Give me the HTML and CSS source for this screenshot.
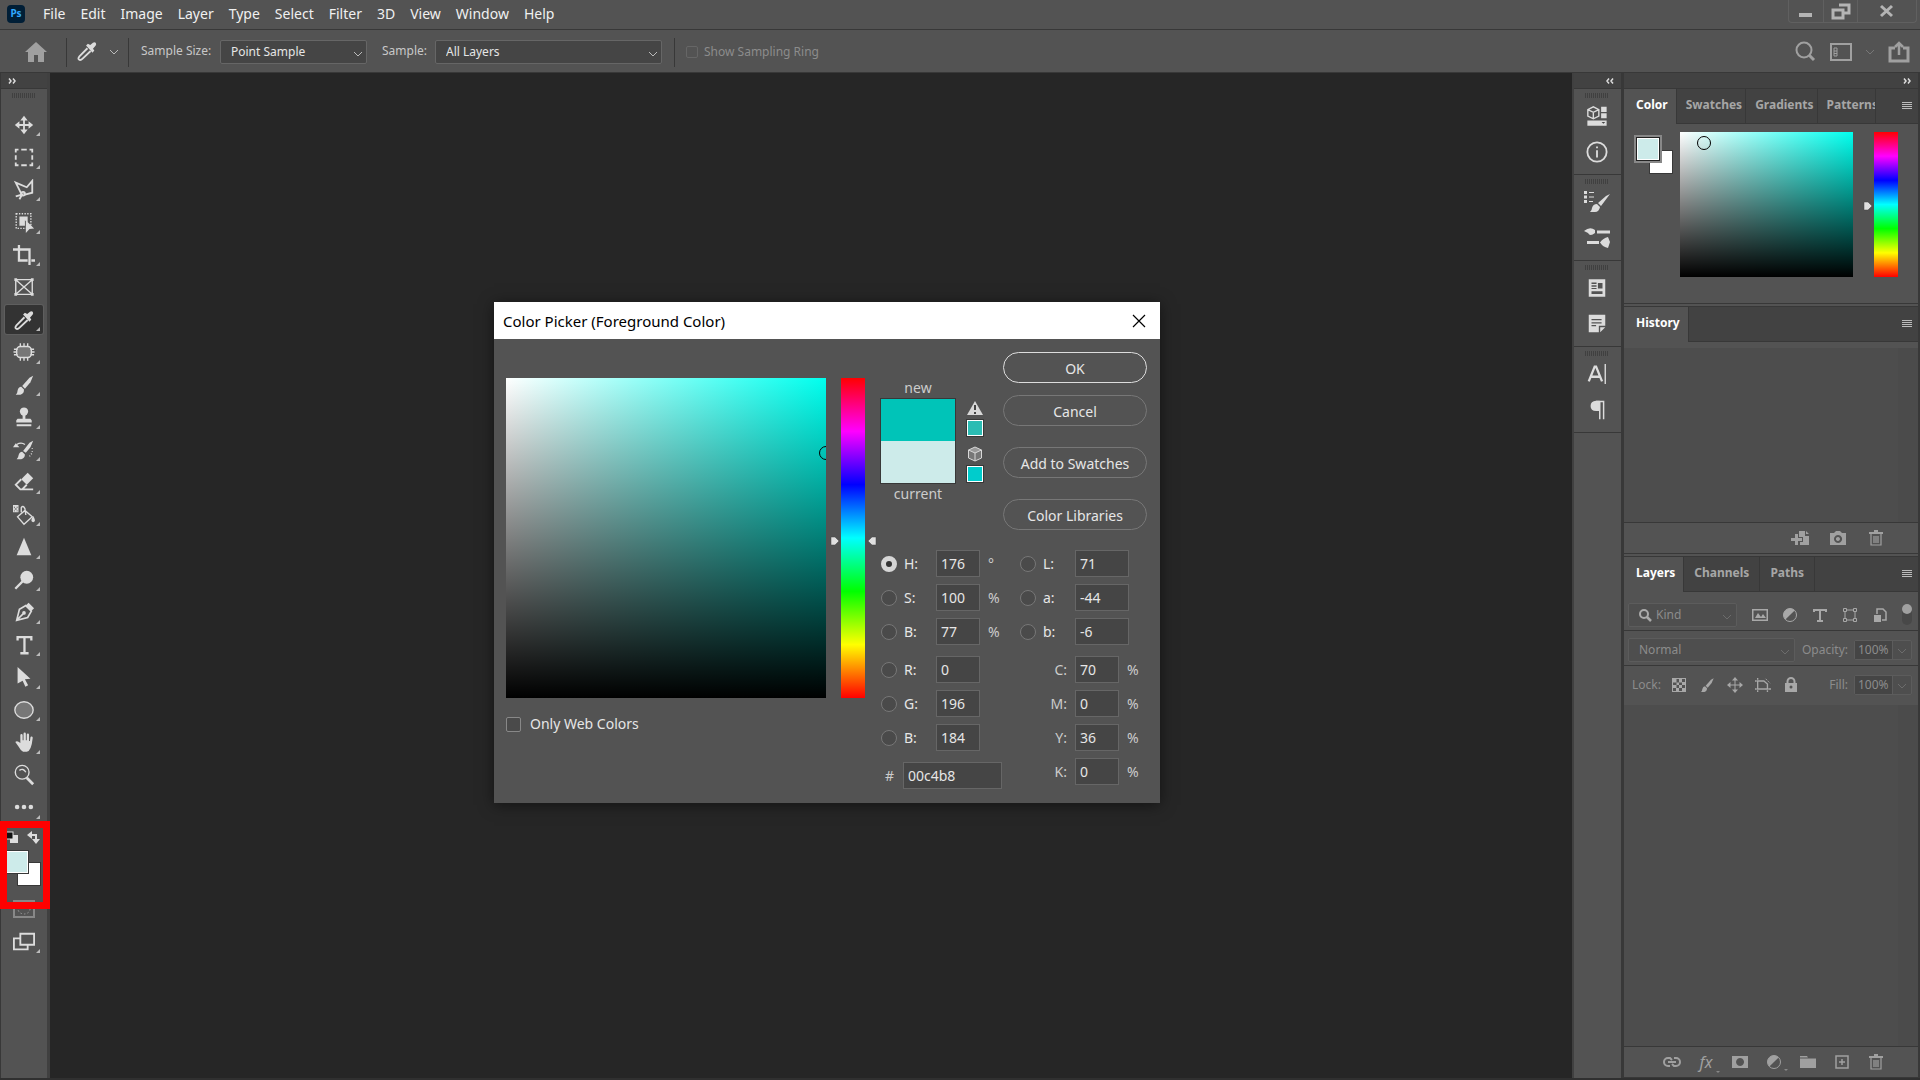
FILE: index.html
```html
<!DOCTYPE html>
<html lang="en">

<head>
    <meta charset="UTF-8">
    <meta name="viewport" content="width=device-width, initial-scale=1.0">
    <title>Photoshop</title>
    <link rel="stylesheet" href="styles.css">
</head>

<body>
    <!-- menu bar -->
    <header class="menubar">
        <span class="logo">Ps</span>
        <nav class="menu">
            <a href="#">File</a>
            <a href="#">Edit</a>
            <a href="#">Image</a>
            <a href="#">Layer</a>
            <a href="#">Type</a>
            <a href="#">Select</a>
            <a href="#">Filter</a>
            <a href="#">3D</a>
            <a href="#">View</a>
            <a href="#">Window</a>
            <a href="#">Help</a>
        </nav>
        <div class="window-buttons">
            <button aria-label="Minimize"><svg width="18" height="18"><path d="M2 11h13v4h-13z" fill="currentColor"/></svg></button>
            <button aria-label="Restore"><svg width="20" height="18"><path d="M8 3h10v8h-5M2 8h10v8h-10z" fill="none" stroke="currentColor" stroke-width="3"/></svg></button>
            <button class="wide" aria-label="Close"><svg width="16" height="16"><path d="M2 3l11 10M13 3l-11 10" stroke="currentColor" stroke-width="3"/></svg></button>
        </div>
    </header>

    <!-- options bar -->
    <div class="options">
        <button class="home" aria-label="Home"><svg width="22" height="20"><path d="M11 0L22 10H19V20H13V13H9V20H3V10H0z" fill="currentColor"/></svg></button>
        <div class="current-tool">
            <svg width="22" height="22" viewBox="0 0 24 24"><use href="#i-dropper"/></svg>
            <svg class="chev" width="10" height="6"><path d="M1 1l4 4l4-4"/></svg>
        </div>
        <label class="opt-label" for="sample-size">Sample Size:</label>
        <div class="select size">
            <select id="sample-size"><option>Point Sample</option></select>
            <svg class="chev" width="10" height="6"><path d="M1 1l4 4l4-4"/></svg>
        </div>
        <label class="opt-label second" for="sample">Sample:</label>
        <div class="select layers">
            <select id="sample"><option>All Layers</option></select>
            <svg class="chev" width="10" height="6"><path d="M1 1l4 4l4-4"/></svg>
        </div>
        <label class="ring"><input type="checkbox" disabled>Show Sampling Ring</label>
        <div class="options-right">
            <button aria-label="Search"><svg width="22" height="22"><circle cx="9" cy="9" r="7.500"/><path d="M14.500 14.500L19 19" stroke-width="3"/></svg></button>
            <button aria-label="Workspace"><svg width="22" height="18"><rect x="1" y="1" width="20" height="16"/><path d="M4 5h3v8h-3z" stroke-width="1"/><path d="M4 8h3M4 10.500h3" stroke-width="1"/></svg></button>
            <svg class="chev dim" width="10" height="6"><path d="M1 1l4 4l4-4"/></svg>
            <button aria-label="Share"><svg width="22" height="22"><path d="M7 7H2V20H20V7H15" stroke-width="3"/><path d="M11 14V3M7 6l4-4l4 4" stroke-width="2.500"/></svg></button>
        </div>
    </div>

    <div class="workspace">
        <!-- tools -->
        <aside class="toolbar">
            <div class="strip"><svg width="8" height="8"><path d="M1 1.500l2 2.500L1 6.500M5 1.500l2 2.500L5 6.500"/></svg></div>
            <div class="grip"></div>
            <div class="tools">
                <button class="tool" aria-label="Move"><svg viewBox="0 0 24 24"><path class="s" d="M12 4V20M4 12H20"/><path class="f" d="M12 2l4 5h-8zM12 22l4-5h-8zM2 12l5-4v8zM22 12l-5-4v8z"/></svg></button>
                <button class="tool" aria-label="Marquee"><svg viewBox="0 0 24 24"><path class="s" d="M3 7V4H6M9 4h6M18 4h3v3M3 10v5M21 10v5M3 18v3h3M9 21h6M18 21h3v-3"/></svg></button>
                <button class="tool" aria-label="Lasso"><svg viewBox="0 0 24 24"><path class="s" d="M9 16L3 4L15 9L21 2V15L13 17M3 19L10 17L7 22"/><circle class="s" cx="11" cy="16" r="2"/></svg></button>
                <button class="tool" aria-label="Object selection"><svg viewBox="0 0 24 24"><rect class="s" x="3.500" y="3" width="16" height="16" stroke-width="1.500" stroke-dasharray="1.500 1.500"/><path class="f" d="M7 6h9v6h-1l-2-2v6H7z"/><path class="f" d="M14 10L23 19L18 19.500L14 24z"/></svg></button>
                <button class="tool" aria-label="Crop"><svg viewBox="0 0 24 24"><path class="s" d="M0 6H18V23M6.500 1V18H16M20 18h4" stroke-width="2.500"/></svg></button>
                <button class="tool plain" aria-label="Frame"><svg viewBox="0 0 24 24"><path class="s" d="M3 4H21V20H3zL21 20M21 4L3 20" stroke-width="1.500"/><path class="f" d="M1.500 2.500h3v3h-3zM19.500 2.500h3v3h-3zM1.500 18.500h3v3h-3zM19.500 18.500h3v3h-3z"/></svg></button>
                <button class="tool active" aria-label="Eyedropper"><svg viewBox="0 0 24 24"><g id="i-dropper" stroke-width="2"><path class="s" d="M12.500 9L4 17.500Q1.500 20.500 3.500 21.500Q5 22.500 7.500 20L16 12"/><path class="f" d="M11 6l2-2l2.500 1.500L18.500 3Q20 2 21.500 3Q22.500 4.500 21.500 6L18.500 9.500L20 11.500L18 14z"/></g></svg></button>
                <button class="tool" aria-label="Patch"><svg viewBox="0 0 24 24"><rect class="s tint" x="4" y="6" width="16" height="12" rx="4" stroke-width="1.500"/><path class="s" d="M8 2.500v4M12 2.500v4M16 2.500v4M8 17.500v4M12 17.500v4M16 17.500v4M1 9h4M.500 12h4M1 15h4M19 9h4M19.500 12h4M19 15h4" stroke-width="1.500"/></svg></button>
                <button class="tool" aria-label="Brush"><svg viewBox="0 0 24 24"><g id="i-brush"><path class="f" d="M22 2L18 4L10 13L13 16L19 9z"/><path class="f" d="M9 14L12 17Q12 22 8 22.500H3Q5 21 5 18Q6 14 9 14z"/></g></svg></button>
                <button class="tool" aria-label="Stamp"><svg viewBox="0 0 24 24"><circle class="f" cx="12" cy="6" r="4.500"/><path class="f" d="M10.500 9h3v5H19Q21 15 20.500 18h-17Q3 15 5 14h5.500zM4 20h16v2H4z"/></svg></button>
                <button class="tool" aria-label="History brush"><svg viewBox="0 0 24 24"><path class="f" d="M22 2L18 4L11 13L14 15L19 9zM10 14L13 17Q13 21 9 22H4Q6 20 6 18Q7 14 10 14zM0 9L3 4.500L7 9z"/><path class="s" d="M4 6Q9 3 13 6" stroke-width="1.500"/><path class="s" d="M21 10v5l-3 4" stroke-width="1.500" stroke-dasharray="1 2"/></svg></button>
                <button class="tool" aria-label="Eraser"><svg viewBox="0 0 24 24"><path class="f" d="M9 9L16 2L22 8L15 15z"/><path class="s" d="M9 9L3 15L8 20H22M15 15L10 20"/></svg></button>
                <button class="tool" aria-label="Bucket"><svg viewBox="0 0 24 24"><path class="s" d="M5 14L13 7L21 14L12 22zM9 9V4Q11 1 13 5L14 12" stroke-width="1.500"/><path class="f" d="M22 13q4 6 0 7q-4-1 0-7zM0 1h6v8h-6z"/><path d="M1 3h1v1H1zM4 3h1v1H4zM2 5h2v1H2zM1 7h1v1H1zM4 7h1v1H4z" fill="#444"/></svg></button>
                <button class="tool" aria-label="Sharpen"><svg viewBox="0 0 24 24"><path class="f" d="M12 2L20 21H4z"/></svg></button>
                <button class="tool" aria-label="Dodge"><svg viewBox="0 0 24 24"><circle class="f" cx="15" cy="9" r="7"/><path class="s" d="M11 13L2.500 21.500" stroke-width="2.500"/></svg></button>
                <button class="tool" aria-label="Pen"><svg viewBox="0 0 24 24"><path class="s" d="M14 5L7 9L4 21L16 18L20 11zM4 21L11 14" stroke-width="1.800"/><path class="f" d="M14 5l3-3l6 6l-3 3z"/><circle class="f" cx="12" cy="13" r="2"/></svg></button>
                <button class="tool" aria-label="Type"><svg viewBox="0 0 24 24"><path class="s" d="M5 7V3.500H20V7M12.500 3.500V21M8 21h9" stroke-width="2.500"/></svg></button>
                <button class="tool" aria-label="Path selection"><svg viewBox="0 0 24 24"><path class="f" d="M5 1L19 14L13 14.500L16.500 21L13.500 22.500L10.500 16L5 19z"/></svg></button>
                <button class="tool" aria-label="Ellipse"><svg viewBox="0 0 24 24"><ellipse class="s tint" cx="12" cy="12" rx="10" ry="9" stroke-width="1.500"/></svg></button>
                <button class="tool" aria-label="Hand"><svg viewBox="0 0 24 24"><path class="f" d="M8 13V4.500a1.200 1.200 0 0 1 2.500 0V10h1V3a1.200 1.200 0 0 1 2.500 0V10h1V4a1.200 1.200 0 0 1 2.500 0V11h1L19 7a1.200 1.200 0 0 1 2.500 .5Q20 22 15 22.500H11Q8 21 6 17L2.500 12q2-2 5.500 1z"/></svg></button>
                <button class="tool plain" aria-label="Zoom"><svg viewBox="0 0 24 24"><circle class="s" cx="10" cy="9" r="7.500" stroke-width="1.500"/><path class="s" d="M7 7q4-3 7 2" stroke-width="1.500"/><path class="s" d="M15 15L22 22" stroke-width="3"/></svg></button>
                <button class="tool" aria-label="More"><svg viewBox="0 0 24 24"><circle class="f" cx="4.500" cy="12" r="2.500"/><circle class="f" cx="12" cy="12" r="2.500"/><circle class="f" cx="19.500" cy="12" r="2.500"/></svg></button>
            </div>
            <div class="tool-colors">
                <svg width="46" height="80" viewBox="1 824 46 80">
                    <rect x="10" y="835" width="8" height="8" fill="#ddd"/>
                    <rect x="5" y="832" width="8" height="7" fill="#111" stroke="#ddd"/>
                    <path d="M30 835h6v6" fill="none" stroke="#ddd" stroke-width="2"/>
                    <path d="M27 835l5-4v8zM36 844l-4-5h8z" fill="#ddd"/>
                    <rect x="17" y="862" width="24" height="24" fill="#383838"/>
                    <rect x="18" y="863" width="22" height="22" fill="#fff"/>
                    <rect x="4" y="850" width="25" height="24" fill="#383838"/>
                    <rect x="5" y="851" width="23" height="22" fill="#fff"/>
                    <rect x="6" y="852" width="21" height="20" fill="#cdebea"/>
                </svg>
            </div>
            <div class="view-modes">
                <svg width="24" height="20"><rect x="2" y="1" width="20" height="16" fill="none" stroke="#888" stroke-width="2"/><ellipse cx="12" cy="9" rx="6" ry="5" fill="none" stroke="#999" stroke-dasharray="1.500 2"/></svg>
                <button class="tool" aria-label="Screen mode"><svg viewBox="0 0 24 24"><path class="s" d="M8 8H1V20H16V16M8 3H23V15H8z"/></svg></button>
            </div>
        </aside>

        <main class="canvas"></main>

        <!-- collapsed panels -->
        <aside class="dock">
            <div class="strip end"><svg width="8" height="8"><path d="M3 1.500L1 4l2 2.500M7 1.500L5 4l2 2.500"/></svg></div>
            <div class="dock-group">
                <div class="grip"></div>
                <button aria-label="Properties"><svg viewBox="0 0 24 24"><path class="s" d="M2 5l6-3l6 3v7l-6 3l-6-3zl6 3l6-3M8 8v7" stroke-width="1.500"/><path class="f" d="M16.500 2h6v5.500h-6zM16.500 9h6v5.500h-6zM1.500 17h21v5.500h-21z"/><path d="M17 18.500h4l-2 2z" fill="#444"/></svg></button>
                <button aria-label="Info"><svg viewBox="0 0 24 24"><circle class="s" cx="12" cy="12" r="10.500"/><path class="s" d="M12 10v8M12 6v2"/></svg></button>
            </div>
            <div class="dock-group">
                <div class="grip"></div>
                <button aria-label="Brush settings"><svg class="big" viewBox="0 0 26 24"><path class="f" d="M0 1h3v3h-3zM0 5.500h3v3h-3zM0 10h3v3h-3zM5 2h5v1h-5zM5 6.500h5v1h-5zM5 11h4v1h-4zM26 4L22 6L14 13L17 16zM13 14L16 17Q15 22 11 22H6Q8 20 8 18Q9 14 13 14z"/></svg></button>
                <button aria-label="Brushes"><svg class="big" viewBox="0 0 26 24"><path class="f" d="M0 5Q6 0 11 4V7Q6 11 4 7zM13 4.500h13v3h-13zM3 15h12v3h-12zM16 16.500Q19 12 24 11L26 16L24 22Q19 21 16 16.500z"/></svg></button>
            </div>
            <div class="dock-group">
                <div class="grip"></div>
                <button aria-label="Libraries"><svg viewBox="0 0 24 24"><path class="f" fill-rule="evenodd" d="M3 2.500h18v19H3zM6 6v1.500h5.500V6zM6 9v1.500h5.500V9zM6 12v1h5.500v-1zM13 6.500v6h5v-6zM6 15.500v3h12v-3z"/></svg></button>
                <button aria-label="Notes"><svg viewBox="0 0 24 24"><path class="f" fill-rule="evenodd" d="M3 2h18v12h-7v7H3zM6 6.500v1.500h11v-1.500zM6 10v1.500h11v-1.500zM6 13v1.500h5v-1.500zM15.500 15.500h5.500l-5.500 5.500z"/></svg></button>
            </div>
            <div class="dock-group">
                <div class="grip"></div>
                <button aria-label="Character"><svg viewBox="0 0 24 24"><path class="s" d="M3 20L9.500 4H11L17.500 20M6 15h9" stroke-width="2.500"/><path class="s" d="M21 1v22" stroke-width="1.500"/></svg></button>
                <button aria-label="Paragraph"><svg viewBox="0 0 24 24"><path class="f" d="M15 2H11Q5 2.500 5 7.500Q5 13 11 13H15z"/><path class="s" d="M11 2.800H20M15 3v19M19.200 3v19" stroke-width="1.600"/></svg></button>
            </div>
        </aside>

        <!-- panels -->
        <aside class="panels">
            <div class="strip end"><svg width="8" height="8"><path d="M1 1.500l2 2.500L1 6.500M5 1.500l2 2.500L5 6.500"/></svg></div>

            <section class="panel color-panel">
                <div class="tabs">
                    <button class="tab on">Color</button>
                    <button class="tab">Swatches</button>
                    <button class="tab">Gradients</button>
                    <button class="tab clip">Patterns</button>
                    <button class="panel-menu" aria-label="Color panel menu"></button>
                </div>
                <div class="color-body">
                    <div class="pair"><span class="bg"></span><span class="fg"></span></div>
                    <div class="field small"><span class="ring-mark"></span></div>
                    <div class="hue small">
                        <svg class="mark left" width="9" height="10"><path d="M1 1h4l4 4l-4 4h-4z"/></svg>
                        <input type="range" min="0" max="360" value="176" aria-label="Hue">
                    </div>
                </div>
            </section>

            <section class="panel history">
                <div class="tabs">
                    <button class="tab on">History</button>
                    <button class="panel-menu" aria-label="History panel menu"></button>
                </div>
                <div class="list"></div>
                <div class="panel-foot">
                    <button aria-label="New document from state"><svg viewBox="0 0 20 16"><path d="M9 1h6v5h4v9h-9v-3h3V7H9zM16 1l3 3h-3zM1 8h4V4h3v4h4v3h-4v4h-3v-4H1z"/></svg></button>
                    <button aria-label="New snapshot"><svg viewBox="0 0 20 16"><path fill-rule="evenodd" d="M2 3h4l2-2h4l2 2h4v12H2zM10 5a4 4 0 1 0 .1 0zM10 7a2 2 0 1 1-.1 0z"/></svg></button>
                    <button aria-label="Delete state"><svg viewBox="0 0 20 16"><g id="i-trash"><path d="M3 2h14v2h-14zM8 0h4v2h-4z"/><path d="M5 4V15H15V4M8 6v7M10 6v7M12 6v7" fill="none" stroke="currentColor" stroke-width="1.200"/></g></svg></button>
                </div>
            </section>

            <section class="panel layers-panel">
                <div class="tabs">
                    <button class="tab on">Layers</button>
                    <button class="tab">Channels</button>
                    <button class="tab">Paths</button>
                    <button class="panel-menu" aria-label="Layers panel menu"></button>
                </div>
                <div class="layer-row filter">
                    <div class="select off kind">
                        <svg class="glass" width="13" height="13"><circle cx="5" cy="5" r="4"/><path d="M8 8l4 4" stroke-width="2.500"/></svg>
                        <select disabled aria-label="Filter type"><option>Kind</option></select>
                        <svg class="chev" width="10" height="6"><path d="M1 1l4 4l4-4"/></svg>
                    </div>
                    <div class="filters">
                        <button aria-label="Pixel layers"><svg viewBox="0 0 16 16"><path fill-rule="evenodd" d="M0 2h16v12H0zM1.500 3.500v9h13v-9zM3 11l3-5l3 4l2-3l3 4z"/></svg></button>
                        <button aria-label="Adjustment layers"><svg viewBox="0 0 16 16"><g id="i-adjust"><circle cx="8" cy="8" r="6.500" fill="none" stroke="currentColor"/><path d="M12.600 3.400A6.500 6.500 0 0 0 3.400 12.600z"/></g></svg></button>
                        <button aria-label="Type layers"><svg viewBox="0 0 16 16"><path d="M2 5V3H14V5M8 3v11M5 14h6" fill="none" stroke="currentColor" stroke-width="2"/></svg></button>
                        <button aria-label="Shape layers"><svg viewBox="0 0 16 16"><path d="M5 3h6M5 13h6M3 5v6M13 5v6M1.500 1.500h3v3h-3zM11.500 1.500h3v3h-3zM1.500 11.500h3v3h-3zM11.500 11.500h3v3h-3z" fill="none" stroke="currentColor"/></svg></button>
                        <button aria-label="Smart objects"><svg viewBox="0 0 16 16"><path d="M5 7V2H11L14 5V13H10" fill="none" stroke="currentColor" stroke-width="1.500"/><path d="M2 8h7v7H2z"/></svg></button>
                        <button class="switch" aria-label="Filtering on/off"></button>
                    </div>
                </div>
                <div class="layer-row mode">
                    <div class="select off blend">
                        <select disabled aria-label="Blend mode"><option>Normal</option></select>
                        <svg class="chev" width="10" height="6"><path d="M1 1l4 4l4-4"/></svg>
                    </div>
                    <label class="amount">Opacity: <span class="combo"><input value="100%" disabled><svg class="chev" width="10" height="6"><path d="M1 1l4 4l4-4"/></svg></span></label>
                </div>
                <div class="layer-row last">
                    <span class="lock">Lock:</span>
                    <div class="locks">
                        <button aria-label="Lock transparency"><svg viewBox="0 0 16 16"><path fill-rule="evenodd" d="M1 1h14v14H1zM5.500 2v3.500H2V8h3.500V5.500H8V2zM8 5.500V8h3V5.500zM11 2v3h3V2zM11 8v3h3V8zM5.500 8v3H8V8zM2 11v3h3v-3zM8 11v3h3v-3z"/></svg></button>
                        <button aria-label="Lock pixels"><svg viewBox="0 0 24 24"><use href="#i-brush"/></svg></button>
                        <button aria-label="Lock position"><svg viewBox="0 0 16 16"><path d="M8 2v12M2 8h12" stroke="currentColor"/><path d="M8 0l3 3.500H5zM8 16l3-3.500H5zM0 8l3.500-3v6zM16 8l-3.500-3v6z"/></svg></button>
                        <button aria-label="Lock artboard"><svg viewBox="0 0 18 16"><path d="M3 0v2M0 3.500h2M3 3.500H10L14 7V12.500H3zM3 14v2M0 12.500h2M14 14v2M15 12.500h3" fill="none" stroke="currentColor" stroke-width="1.500"/><path d="M12 1l5 5" stroke="currentColor" stroke-dasharray="2 1"/></svg></button>
                        <button aria-label="Lock all"><svg viewBox="0 0 16 16"><path d="M2 6h12v9H2z"/><path d="M4.500 7V4.500a3.500 3.500 0 0 1 7 0V7" fill="none" stroke="currentColor" stroke-width="2"/><circle cx="8" cy="10" r="1.500" fill="#535353"/></svg></button>
                    </div>
                    <label class="amount">Fill: <span class="combo"><input value="100%" disabled><svg class="chev" width="10" height="6"><path d="M1 1l4 4l4-4"/></svg></span></label>
                </div>
                <div class="list"></div>
                <div class="panel-foot">
                    <button aria-label="Link layers"><svg viewBox="0 0 20 16"><path d="M8 12H6a4 4 0 0 1 0-8h2l2 2M12 4h2a4 4 0 0 1 0 8h-2l-2-2M6 8h8" fill="none" stroke="currentColor" stroke-width="2"/></svg></button>
                    <button class="fx more">fx</button>
                    <button aria-label="Add mask"><svg viewBox="0 0 20 16"><path fill-rule="evenodd" d="M2 2h16v12H2zM10 4a4 4 0 1 0 .1 0z"/></svg></button>
                    <button class="more" aria-label="New adjustment layer"><svg viewBox="-2 0 20 16"><use href="#i-adjust"/></svg></button>
                    <button aria-label="New group"><svg viewBox="0 0 20 16"><path d="M2 2h7l1 1.500H2zM2 4.500h16V14H2z"/></svg></button>
                    <button aria-label="New layer"><svg viewBox="0 0 20 16"><path d="M4 2h12v12H4zM10 5v6M7 8h6" fill="none" stroke="currentColor" stroke-width="1.500"/></svg></button>
                    <button aria-label="Delete layer"><svg viewBox="0 0 20 16"><use href="#i-trash"/></svg></button>
                </div>
            </section>
        </aside>
    </div>

    <!-- color picker window -->
    <form class="dialog">
        <div class="title">
            <span>Color Picker (Foreground Color)</span>
            <button type="button" aria-label="Close dialog"><svg width="14" height="14"><path d="M1 1l12 12M13 1l-12 12" stroke="#000" stroke-width="1.200"/></svg></button>
        </div>
        <div class="dialog-body">
            <div class="picker">
                <div class="picker-top">
                    <div class="field"><span class="ring-mark"></span></div>
                    <div class="hue">
                        <svg class="mark left" width="9" height="10"><path d="M1 1h4l4 4l-4 4h-4z"/></svg>
                        <input type="range" min="0" max="360" value="176" aria-label="Hue">
                        <svg class="mark right" width="9" height="10"><path d="M8 1h-4l-4 4l4 4h4z"/></svg>
                    </div>
                </div>
                <label class="web"><input type="checkbox">Only Web Colors</label>
            </div>
            <div class="side">
                <div class="side-top">
                    <div class="preview">
                        <span>new</span>
                        <div class="compare"><i class="new"></i><i class="cur"></i></div>
                        <span>current</span>
                    </div>
                    <div class="warnings">
                        <svg width="16" height="16"><path d="M8 1L16 15H0z" fill="#d8d8d8"/><path d="M8 5v5M8 12v2" stroke="#444" stroke-width="2"/></svg>
                        <i class="gamut"></i>
                        <svg width="16" height="16"><path d="M1.500 4L8 1L14.500 4V12L8 15L1.500 12z" fill="#777"/><path d="M8 7L14.500 4L8 1L1.500 4z" fill="#999"/><path d="M1.500 4L8 1L14.500 4V12L8 15L1.500 12V4L8 7L14.500 4M8 7V15" fill="none" stroke="#d8d8d8"/></svg>
                        <i class="websafe"></i>
                    </div>
                    <div class="actions">
                        <button type="button" class="ok">OK</button>
                        <button type="button" class="cancel">Cancel</button>
                        <button type="button">Add to Swatches</button>
                        <button type="button">Color Libraries</button>
                    </div>
                </div>
                <div class="values">
                    <div class="col">
                        <div class="row"><label><input type="radio" name="c" checked>H:</label><input type="text" value="176" aria-label="H"><span>°</span></div>
                        <div class="row"><label><input type="radio" name="c">S:</label><input type="text" value="100" aria-label="S"><span>%</span></div>
                        <div class="row end"><label><input type="radio" name="c">B:</label><input type="text" value="77" aria-label="B"><span>%</span></div>
                        <div class="row"><label><input type="radio" name="c">R:</label><input type="text" value="0" aria-label="R"></div>
                        <div class="row"><label><input type="radio" name="c">G:</label><input type="text" value="196" aria-label="G"></div>
                        <div class="row end"><label><input type="radio" name="c">B:</label><input type="text" value="184" aria-label="Blue"></div>
                        <div class="row hex"><label for="hex">#</label><input type="text" id="hex" value="00c4b8"></div>
                    </div>
                    <div class="col lab">
                        <div class="row"><label><input type="radio" name="c">L:</label><input type="text" value="71" aria-label="L"></div>
                        <div class="row"><label><input type="radio" name="c">a:</label><input type="text" value="-44" aria-label="a"></div>
                        <div class="row end"><label><input type="radio" name="c">b:</label><input type="text" value="-6" aria-label="b"></div>
                        <div class="row cmyk"><label for="cy">C:</label><input type="text" id="cy" value="70"><span>%</span></div>
                        <div class="row cmyk"><label for="ma">M:</label><input type="text" id="ma" value="0"><span>%</span></div>
                        <div class="row cmyk"><label for="ye">Y:</label><input type="text" id="ye" value="36"><span>%</span></div>
                        <div class="row cmyk"><label for="bk">K:</label><input type="text" id="bk" value="0"><span>%</span></div>
                    </div>
                </div>
            </div>
        </div>
    </form>
</body>

</html>
```
FILE: styles.css
```css
:root {
    --bg: #535353;
    --dark: #424242;
    --line: #383838;
    --input: #454545;
    --edge: #666;
    --text: #e6e6e6;
    --icon: #dcdcdc;
    --dim: #8c8c8c;
    --hues: linear-gradient(#f00, #f0f, #00f, #0ff, #0f0, #ff0, #f00);
}

*,
*::before,
*::after {
    box-sizing: border-box;
    margin: 0;
    padding: 0;
}

body {
    display: flex;
    flex-direction: column;
    height: 100vh;
    overflow: hidden;
    background: #262626;
    color: var(--text);
    font: 12px/20px "Noto Sans", sans-serif;
}

button,
input,
select {
    font: inherit;
    color: inherit;
}

button {
    background: none;
    border: 0;
}

svg {
    display: block;
}

.s {
    fill: none;
    stroke: var(--icon);
}

.s.tint {
    fill: #777;
}

.f {
    fill: var(--icon);
}

.chev {
    fill: none;
    stroke: #bbb;
    stroke-width: 1;
}

.chev.dim {
    stroke: #777;
}

/* menu bar */
.menubar {
    display: flex;
    align-items: center;
    flex: none;
    height: 30px;
    padding: 0 3px 2px 7px;
    background: var(--bg);
    border-bottom: 1px solid var(--line);
}

.logo {
    width: 18px;
    height: 18px;
    border-radius: 4px;
    background: #001e36;
    color: #31a8ff;
    font-size: 10px;
    font-weight: 700;
    line-height: 17px;
    text-align: center;
}

.menu {
    display: flex;
    gap: 15px;
    padding-left: 18px;
    font-size: 14px;
}

.menu a {
    color: #f0f0f0;
    text-decoration: none;
}

.window-buttons {
    display: flex;
    align-self: flex-start;
    height: 23px;
    margin-left: auto;
    border: 1px solid #606060;
    border-top: 0;
    border-radius: 0 0 4px 4px;
    color: #b4b4b4;
}

.window-buttons button {
    display: flex;
    align-items: center;
    justify-content: center;
    width: 34px;
}

.window-buttons button + button {
    border-left: 1px solid #606060;
}

.window-buttons .wide {
    width: 59px;
}

/* options bar */
.options {
    display: flex;
    align-items: center;
    flex: none;
    height: 43px;
    padding: 2px 10px 0 25px;
    background: var(--bg);
    border-bottom: 1px solid var(--line);
}

.home {
    color: #a0a0a0;
    margin-right: 19px;
}

.current-tool {
    display: flex;
    align-items: center;
    gap: 11px;
    height: 29px;
    width: 63px;
    padding-left: 9px;
    border: solid var(--line);
    border-width: 0 1px;
}

.current-tool svg:first-child {
    margin-bottom: 3px;
}

.opt-label {
    width: 79px;
    margin-left: 12px;
    padding-bottom: 3px;
    color: #c8c8c8;
}

.opt-label.second {
    width: 53px;
    margin-left: 15px;
}

.select {
    position: relative;
    height: 24px;
    border: 1px solid var(--edge);
    border-radius: 2px;
    background: var(--input);
}

.select select {
    width: 100%;
    height: 100%;
    padding: 0 20px 0 10px;
    appearance: none;
    background: none;
    border: 0;
    opacity: 1;
}

.select .chev {
    position: absolute;
    right: 3px;
    top: 10px;
    pointer-events: none;
}

.select.size {
    width: 147px;
}

.select.layers {
    width: 227px;
}

.ring {
    display: flex;
    align-items: center;
    gap: 6px;
    height: 29px;
    margin-left: 12px;
    padding-left: 11px;
    border-left: 1px solid var(--line);
    color: var(--dim);
}

input[type="checkbox"] {
    width: 12px;
    height: 12px;
    appearance: none;
    border: 1px solid var(--edge);
    border-radius: 2px;
}

.options-right {
    display: flex;
    align-items: center;
    gap: 13px;
    margin-left: auto;
    color: #a0a0a0;
}

.options-right button svg {
    fill: none;
    stroke: currentColor;
    stroke-width: 2;
}

/* workspace */
.workspace {
    display: flex;
    flex: 1;
    min-height: 0;
    border-bottom: 2px solid #303030;
}

.canvas {
    flex: 1;
    background: #262626;
}

.strip {
    display: flex;
    align-items: center;
    flex: none;
    height: 16px;
    padding: 0 7px;
    background: var(--dark);
    border-bottom: 1px solid var(--line);
}

.strip.end {
    justify-content: flex-end;
}

.strip svg {
    fill: none;
    stroke: #ddd;
    stroke-width: 1.500;
}

.grip {
    width: 24px;
    height: 5px;
    margin: 4px auto 0;
    background: repeating-linear-gradient(90deg, #404040 0 1px, var(--bg) 1px 2px);
}

.toolbar {
    position: relative;
    z-index: 1;
    display: flex;
    flex-direction: column;
    width: 50px;
    background: var(--bg);
    border-left: 1px solid var(--line);
    border-right: 3px solid #404040;
}

.tools {
    display: grid;
    grid-auto-rows: 1fr;
    height: 715px;
    margin-top: 10px;
}

.tool {
    position: relative;
    display: flex;
    align-items: center;
    justify-content: center;
    width: 38px;
    height: 29px;
    margin: 2px 0 0 4px;
}

.tool svg,
.dock-group svg {
    width: 22px;
    height: 22px;
    stroke-width: 2;
}

.tool::after {
    content: "";
    position: absolute;
    right: 3px;
    bottom: 3px;
    border-left: 4px solid transparent;
    border-bottom: 4px solid #bbb;
}

.tool.plain::after {
    display: none;
}

.tool.active {
    background: #333;
    border-radius: 2px;
    box-shadow: 0 0 0 1px #5e5e5e;
}

.tool-colors {
    position: relative;
    height: 76px;
    margin-top: 1px;
}

/* highlight frame around the color swatches */
.tool-colors::after {
    content: "";
    position: absolute;
    left: -1px;
    top: -3px;
    width: 50px;
    height: 88px;
    border: 7px solid #f00;
}

.view-modes {
    display: flex;
    flex-direction: column;
    gap: 5px;
}

.view-modes > svg {
    margin-left: 11px;
}

/* collapsed dock */
.dock {
    width: 52px;
    background: var(--bg);
    border-left: 2px solid #404040;
    border-right: 3px solid var(--line);
}

.dock-group {
    display: flex;
    flex-direction: column;
    align-items: center;
    height: 86px;
    padding-right: 1px;
    border-bottom: 1px solid var(--line);
}

.dock-group button {
    display: flex;
    align-items: center;
    height: 36px;
}

.dock-group svg.big {
    width: 26px;
    height: 24px;
}

/* panels */
.panels {
    display: flex;
    flex-direction: column;
    width: 296px;
    background: var(--bg);
    border-right: 2px solid var(--line);
}

.panel + .panel {
    border-top: 1px solid var(--line);
}

.panel {
    margin-bottom: 2px;
    border-bottom: 1px solid var(--line);
}

.tabs {
    display: flex;
    height: 35px;
    background: var(--dark);
    color: #a6a6a6;
    font-weight: 700;
}

.tab {
    flex: none;
    padding: 0 10px 3px;
    border: solid var(--line);
    border-width: 0 1px 1px 0;
}

.color-panel .tab {
    padding: 0 3px 3px 9px;
}

.panel .tab.on {
    padding: 0 8px 3px 12px;
    border-bottom: 0;
    background: var(--bg);
    color: #fff;
}

.tab.clip {
    width: 58px;
    overflow: hidden;
    text-align: left;
}

.panel-menu {
    flex: 1;
    border-bottom: 1px solid var(--line);
}

.panel-menu::after {
    content: "";
    display: block;
    width: 10px;
    height: 7px;
    margin: 0 6px 2px auto;
    background: repeating-linear-gradient(#bbb 0 1px, transparent 1px 2px);
}

.color-body {
    display: flex;
    height: 179px;
    padding: 8px 20px 0 10px;
}

.pair {
    position: relative;
    width: 39px;
    height: 39px;
    margin: 3px 7px 0 0;
}

.pair span {
    position: absolute;
}

.pair .bg {
    right: 0;
    bottom: 0;
    width: 24px;
    height: 24px;
    border: 1px solid var(--line);
    background: #fff;
}

.pair .fg {
    left: 0;
    top: 0;
    width: 28px;
    height: 28px;
    border: 2px solid #888;
    outline: 1px solid #222;
    outline-offset: -3px;
    background: #cdebea;
    box-shadow: inset 0 0 0 2px #fff;
}

.field {
    position: relative;
    width: 320px;
    height: 320px;
    overflow: hidden;
    background: linear-gradient(to top, #000, transparent), linear-gradient(to right, #fff, #00ffee);
}

.field.small {
    flex: 1;
    width: auto;
    height: 145px;
}

.ring-mark {
    position: absolute;
    left: 313px;
    top: 68px;
    width: 14px;
    height: 14px;
    border: 1px solid #000;
    border-radius: 50%;
}

.small .ring-mark {
    left: 17px;
    top: 4px;
}

.hue {
    position: relative;
    width: 24px;
    height: 320px;
    margin-left: 15px;
}

.hue.small {
    height: 145px;
    margin-left: 21px;
}

.hue input {
    display: block;
    width: 100%;
    height: 100%;
    appearance: none;
    writing-mode: vertical-lr;
    background: var(--hues);
}

.hue input::-webkit-slider-thumb {
    appearance: none;
    width: 24px;
    height: 1px;
}

.mark {
    position: absolute;
    top: calc(51% - 5px);
    stroke: #444;
    stroke-width: .5;
}

.hue .mark {
    fill: #e0e0e0;
}

.mark.left {
    left: -11px;
}

.mark.right {
    right: -12px;
}

.list {
    background: #4d4d4d;
    border-right: 20px solid #4b4b4b;
}

.history .list {
    height: 174px;
    margin-top: 6px;
}

.layers-panel {
    --icon: #a8a8a8;
    display: flex;
    flex: 1;
    flex-direction: column;
    margin: 0;
}

.layers-panel .list {
    flex: 1;
}

.panel-foot {
    display: flex;
    align-items: center;
    justify-content: flex-end;
    gap: 14px;
    height: 31px;
    padding-right: 32px;
    border-top: 1px solid var(--line);
    color: #a0a0a0;
}

.panel-foot button {
    width: 20px;
}

.history .panel-foot {
    gap: 18px;
}

.panel svg {
    fill: currentColor;
}

.panel .chev,
.panel .glass {
    fill: none;
}

.fx {
    font: italic 16px/20px "Noto Sans", sans-serif;
}

.more {
    position: relative;
}

.more::after {
    content: "";
    position: absolute;
    right: -4px;
    bottom: -3px;
    border: 2px solid transparent;
    border-top-color: #888;
}

.layer-row {
    display: flex;
    align-items: center;
    justify-content: space-between;
    height: 35px;
    padding: 0 6px 0 4px;
    border-bottom: 1px solid var(--line);
    color: var(--dim);
}

.layer-row.filter {
    height: 39px;
    padding-top: 7px;
}

.layer-row.mode {
    padding-top: 3px;
}

.layer-row.last {
    height: 39px;
    padding-bottom: 2px;
    border-bottom: 0;
}

.select.off,
.combo {
    background: #4e4e4e;
    border-color: #5c5c5c;
}

.select.off .chev {
    right: 4px;
    stroke: #6c6c6c;
}

.kind {
    width: 109px;
}

.kind select {
    padding-left: 27px;
}

.glass {
    position: absolute;
    left: 10px;
    top: 5px;
    stroke: #aaa;
    stroke-width: 2;
}

.blend {
    width: 167px;
}

.filters {
    display: flex;
    align-items: center;
    gap: 14px;
    color: #a8a8a8;
}

.filters button {
    width: 16px;
}

.filters .switch {
    width: 10px;
    height: 21px;
    border-radius: 5px;
    background: #484848;
}

.switch::before {
    content: "";
    display: block;
    width: 10px;
    height: 10px;
    margin-bottom: 11px;
    border-radius: 50%;
    background: #a0a0a0;
}

.amount {
    display: flex;
    align-items: center;
    gap: 6px;
}

.combo {
    display: flex;
    align-items: center;
    width: 58px;
    height: 20px;
    border: 1px solid #5c5c5c;
    border-radius: 2px;
}

.combo input {
    width: 38px;
    height: 18px;
    padding-left: 3px;
    border: 0;
    border-right: 1px solid #5c5c5c;
    background: var(--input);
}

.combo .chev {
    margin: 2px auto 0;
    stroke: #6c6c6c;
}

.lock {
    padding-left: 4px;
}

.locks {
    display: flex;
    gap: 12px;
    margin-right: 20px;
    color: #a8a8a8;
}

.locks svg {
    width: 16px;
    height: 16px;
}

/* color picker window */
.dialog {
    position: absolute;
    z-index: 2;
    left: 494px;
    top: 302px;
    width: 666px;
    background: var(--bg);
    box-shadow: 0 2px 14px rgba(0, 0, 0, .5);
    font-size: 14px;
}

.title {
    display: flex;
    align-items: center;
    justify-content: space-between;
    height: 37px;
    padding: 0 14px 0 9px;
    background: #fff;
    color: #000;
    font-size: 15px;
}

.dialog-body {
    display: flex;
    height: 464px;
    padding: 13px 13px 0 12px;
}

.picker {
    padding-top: 26px;
}

.picker-top {
    display: flex;
}

.web {
    display: flex;
    align-items: center;
    gap: 9px;
    margin-top: 16px;
}

.web input {
    width: 15px;
    height: 15px;
    border-color: #888;
    background: #4a4a4a;
}

.side {
    flex: 1;
    margin-left: 15px;
}

.side-top {
    display: flex;
    height: 198px;
}

.preview {
    width: 76px;
    padding-top: 26px;
    color: #ccc;
    text-align: center;
}

.preview span {
    display: block;
}

.compare {
    height: 86px;
    border: 1px solid var(--line);
}

.compare i {
    display: block;
    height: 50%;
    background: #00c4b8;
}

.compare .cur {
    background: #cdebea;
}

.warnings {
    display: grid;
    gap: 3px;
    align-content: start;
    margin-left: 11px;
    padding-top: 48px;
}

.warnings i {
    width: 16px;
    height: 16px;
    margin: 1px 0 7px;
    border: 1px solid #fff;
    outline: 1px solid var(--line);
}

.gamut {
    background: #2bbcb3;
}

.websafe {
    background: #00cccc;
}

.actions {
    width: 144px;
    margin-left: auto;
}

.actions button {
    display: block;
    width: 100%;
    height: 31px;
    margin-bottom: 21px;
    padding-top: 2px;
    border: 1px solid #777;
    border-radius: 16px;
}

.actions .ok {
    margin-bottom: 12px;
    border: 1px solid #ddd;
}

.values {
    display: flex;
    justify-content: space-between;
}

.lab {
    width: 128px;
}

.row {
    display: flex;
    align-items: center;
    height: 27px;
    margin-bottom: 7px;
}

.row.end {
    margin-bottom: 11px;
}

.row label {
    display: flex;
    align-items: center;
    gap: 7px;
    width: 56px;
}

.row span {
    padding-left: 8px;
    color: #ccc;
}

.row input[type="text"] {
    width: 44px;
    height: 27px;
    padding-left: 4px;
    border: 1px solid var(--edge);
    background: var(--input);
}

.row input[type="radio"] {
    width: 16px;
    height: 16px;
    margin-left: 1px;
    appearance: none;
    border: 1px solid #777;
    border-radius: 50%;
    background: #4a4a4a;
}

.row input[type="radio"]:checked {
    border: 5px solid #d6d6d6;
    background: #333;
}

.lab .row input[type="text"] {
    width: 54px;
}

.lab .cmyk input[type="text"] {
    width: 44px;
}

.row.cmyk label {
    justify-content: flex-end;
    padding-right: 8px;
    color: #ccc;
}

.row.hex label {
    width: 23px;
    padding-left: 5px;
    color: #ccc;
}

.row.hex input[type="text"] {
    width: 99px;
}
```
